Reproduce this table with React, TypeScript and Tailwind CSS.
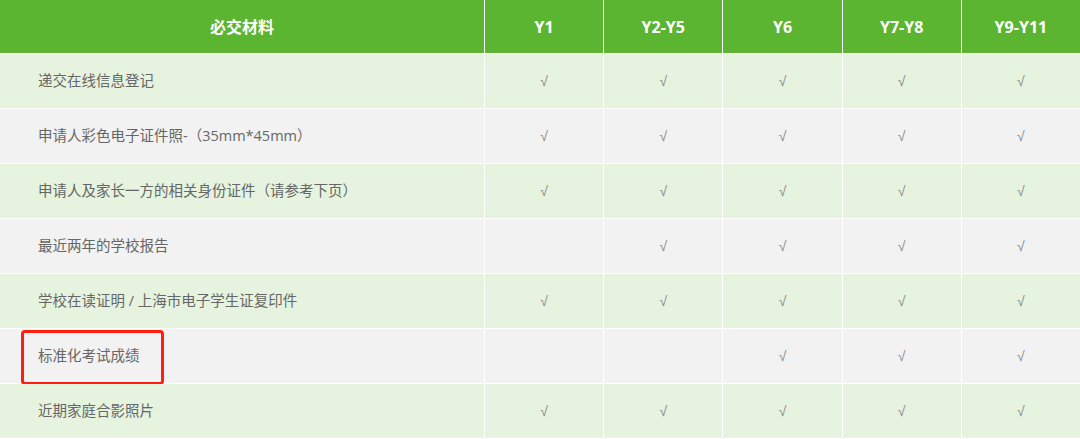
import React from "react";

const cols = ["Y1", "Y2-Y5", "Y6", "Y7-Y8", "Y9-Y11"];

const rows: { label: string; checks: boolean[]; mark?: boolean }[] = [
  { label: "递交在线信息登记", checks: [true, true, true, true, true] },
  { label: "申请人彩色电子证件照-（35mm*45mm）", checks: [true, true, true, true, true] },
  { label: "申请人及家长一方的相关身份证件（请参考下页）", checks: [true, true, true, true, true] },
  { label: "最近两年的学校报告", checks: [false, true, true, true, true] },
  { label: "学校在读证明 / 上海市电子学生证复印件", checks: [true, true, true, true, true] },
  { label: "标准化考试成绩", checks: [false, false, true, true, true], mark: true },
  { label: "近期家庭合影照片", checks: [true, true, true, true, true] },
];

export default function App() {
  return (
    <div
      className="w-[1080px] h-[439px] bg-white overflow-hidden"
      style={{ fontFamily: '"Open Sans", "Noto Sans CJK SC", sans-serif' }}
    >
      <div className="grid grid-cols-[484px_repeat(5,1fr)] grid-rows-[53px_repeat(7,54px)] gap-px bg-white">
        <div className="bg-[#5cb531] flex items-center justify-center text-white font-bold text-[16px]">
          必交材料
        </div>
        {cols.map((c) => (
          <div
            key={c}
            className="bg-[#5cb531] flex items-center justify-center text-white font-bold text-[16px]"
          >
            {c}
          </div>
        ))}
        {rows.map((r, i) => {
          const bg = i % 2 === 0 ? "bg-[#e5f3df]" : "bg-[#f2f2f2]";
          return (
            <React.Fragment key={i}>
              <div className={`${bg} relative flex items-center pl-[38px] text-[14.5px] text-[#666666]`}>
                {r.label}
                {r.mark && (
                  <div className="absolute left-[21px] top-px w-[143px] h-[55px] border-[3px] border-[#ff1f10] rounded-[4px]" />
                )}
              </div>
              {r.checks.map((c, j) => (
                <div
                  key={j}
                  className={`${bg} flex items-center justify-center text-[14px] text-[#888888]`}
                  style={{ fontFamily: '"Liberation Sans", sans-serif' }}
                >
                  {c ? "√" : ""}
                </div>
              ))}
            </React.Fragment>
          );
        })}
      </div>
    </div>
  );
}
